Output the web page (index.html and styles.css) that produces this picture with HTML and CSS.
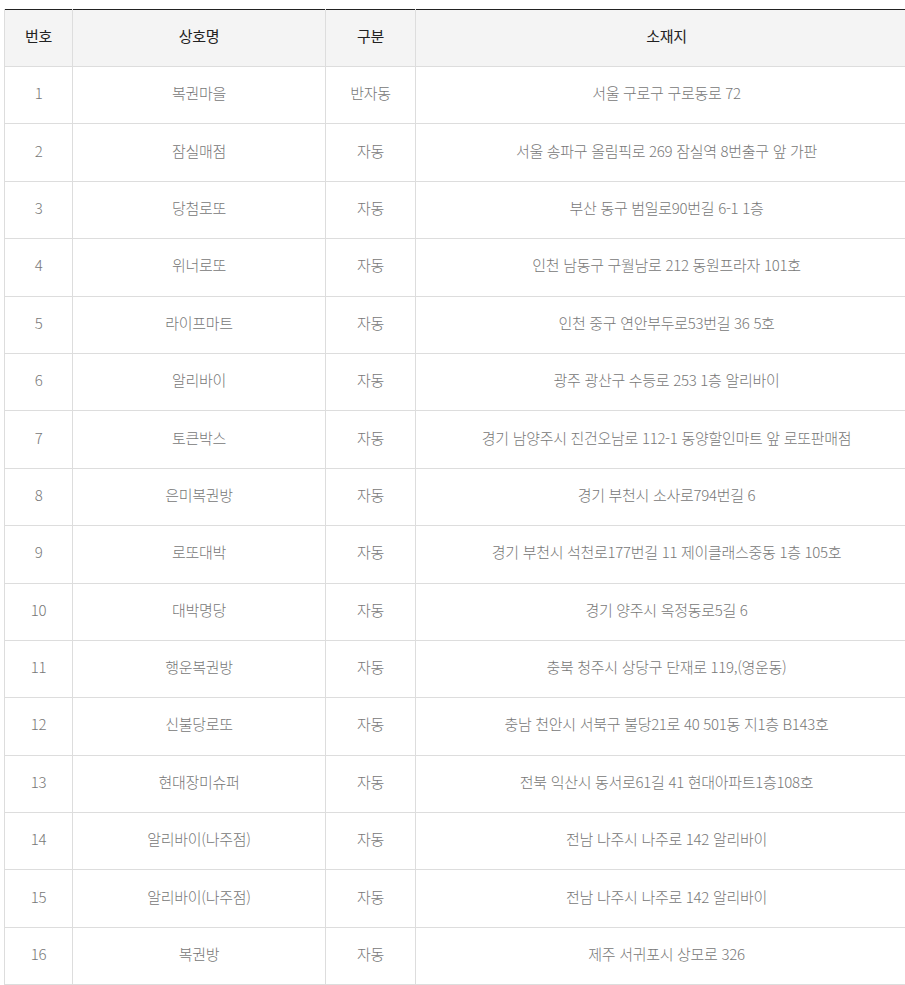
FILE: index.html
```html
<!DOCTYPE html>
<html lang="ko">
<head>
<meta charset="utf-8">
<link rel="stylesheet" href="styles.css">
</head>
<body>
<div class="wrap">
<table class="store-table">
  <colgroup>
    <col class="c-no">
    <col class="c-name">
    <col class="c-type">
    <col class="c-addr">
  </colgroup>
  <thead>
    <tr><th>번호</th><th>상호명</th><th>구분</th><th>소재지</th></tr>
  </thead>
  <tbody>
    <tr><td>1</td><td>복권마을</td><td>반자동</td><td>서울 구로구 구로동로 72</td></tr>
    <tr><td>2</td><td>잠실매점</td><td>자동</td><td>서울 송파구 올림픽로 269 잠실역 8번출구 앞 가판</td></tr>
    <tr><td>3</td><td>당첨로또</td><td>자동</td><td>부산 동구 범일로90번길 6-1 1층</td></tr>
    <tr><td>4</td><td>위너로또</td><td>자동</td><td>인천 남동구 구월남로 212 동원프라자 101호</td></tr>
    <tr><td>5</td><td>라이프마트</td><td>자동</td><td>인천 중구 연안부두로53번길 36 5호</td></tr>
    <tr><td>6</td><td>알리바이</td><td>자동</td><td>광주 광산구 수등로 253 1층 알리바이</td></tr>
    <tr><td>7</td><td>토큰박스</td><td>자동</td><td>경기 남양주시 진건오남로 112-1 동양할인마트 앞 로또판매점</td></tr>
    <tr><td>8</td><td>은미복권방</td><td>자동</td><td>경기 부천시 소사로794번길 6</td></tr>
    <tr><td>9</td><td>로또대박</td><td>자동</td><td>경기 부천시 석천로177번길 11 제이클래스중동 1층 105호</td></tr>
    <tr><td>10</td><td>대박명당</td><td>자동</td><td>경기 양주시 옥정동로5길 6</td></tr>
    <tr><td>11</td><td>행운복권방</td><td>자동</td><td>충북 청주시 상당구 단재로 119,(영운동)</td></tr>
    <tr><td>12</td><td>신불당로또</td><td>자동</td><td>충남 천안시 서북구 불당21로 40 501동 지1층 B143호</td></tr>
    <tr><td>13</td><td>현대장미슈퍼</td><td>자동</td><td>전북 익산시 동서로61길 41 현대아파트1층108호</td></tr>
    <tr><td>14</td><td>알리바이(나주점)</td><td>자동</td><td>전남 나주시 나주로 142 알리바이</td></tr>
    <tr><td>15</td><td>알리바이(나주점)</td><td>자동</td><td>전남 나주시 나주로 142 알리바이</td></tr>
    <tr><td>16</td><td>복권방</td><td>자동</td><td>제주 서귀포시 상모로 326</td></tr>
  </tbody>
</table>
</div>
</body>
</html>
```

FILE: styles.css
```css
html, body {
  margin: 0;
  padding: 0;
  background: #fff;
  overflow: hidden;
}
.wrap {
  padding: 9px 0 0 4px;
  width: 920px;
}
.store-table {
  width: 913px;
  border-collapse: collapse;
  table-layout: fixed;
  font-family: "Noto Sans CJK KR", "Noto Sans", sans-serif;
  font-size: 15px;
  letter-spacing: -0.3px;
  border-top: 1px solid #222;
}
.c-no { width: 68px; }
.c-name { width: 253px; }
.c-type { width: 90px; }
.c-addr { width: auto; }
.store-table th,
.store-table td {
  text-align: center;
  vertical-align: middle;
  padding: 0 0 5px;
  border-bottom: 1px solid #ddd;
  border-left: 1px solid #ddd;
  white-space: nowrap;
}
.store-table th {
  height: 51px;
  background: #f4f4f4;
  color: #222;
  font-weight: 400;
}
.store-table td {
  height: 51.4px;
  color: #777;
  font-weight: 300;
}
```
